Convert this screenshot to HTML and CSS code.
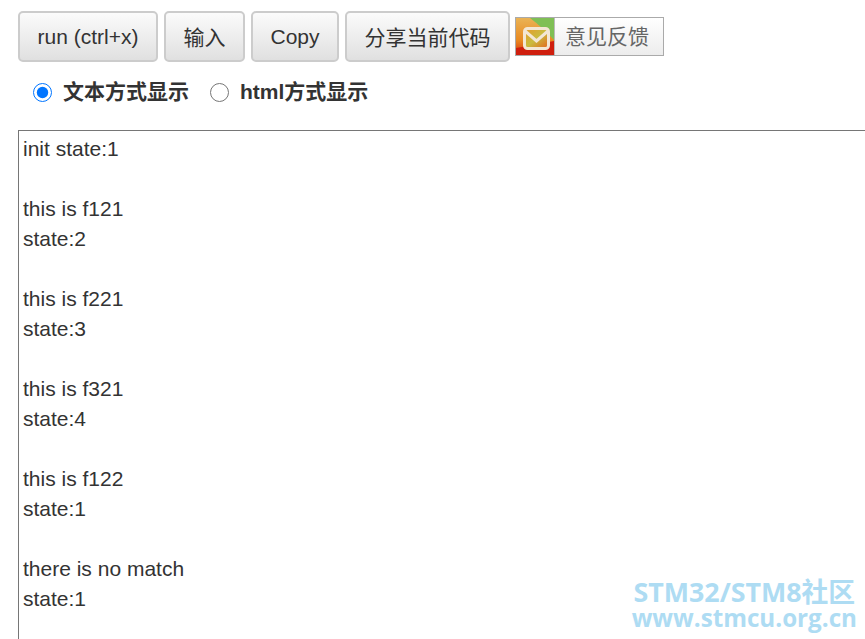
FILE: index.html
```html
<!DOCTYPE html>
<html lang="en">
<head>
    <meta charset="UTF-8">
    <meta name="viewport" content="width=device-width, initial-scale=1.0">
    <title>Run</title>
    <link rel="stylesheet" href="styles.css">
</head>
<body>
    <!-- Toolbar -->
    <div class="toolbar">
        <button class="tool-button btn-run">run (ctrl+x)</button>
        <button class="tool-button btn-input">输入</button>
        <button class="tool-button btn-copy">Copy</button>
        <button class="tool-button btn-share">分享当前代码</button>
        <a class="feedback" href="#">
            <span class="feedback-icon">
                <svg width="38" height="37" viewBox="0 0 38 37">
                    <defs>
                        <linearGradient id="mail-bg" x1="0" y1="0" x2="0" y2="1">
                            <stop offset="0" stop-color="#eab355"/>
                            <stop offset="0.6" stop-color="#e98a22"/>
                            <stop offset="1" stop-color="#d8330f"/>
                        </linearGradient>
                        <linearGradient id="mail-fill" x1="0" y1="0" x2="1" y2="1">
                            <stop offset="0" stop-color="#e8982a"/>
                            <stop offset="0.5" stop-color="#c9bb3e"/>
                            <stop offset="1" stop-color="#e5641c"/>
                        </linearGradient>
                    </defs>
                    <rect width="38" height="37" fill="url(#mail-bg)"/>
                    <path d="M14 0H38V22Q26 9 14 0Z" fill="#7fbf55"/>
                    <path d="M0 30Q18 27 38 23V37H0Z" fill="#cf1f0e"/>
                    <rect x="8.5" y="10.5" width="24" height="20" rx="3" fill="url(#mail-fill)" stroke="#f3e6d3" stroke-width="3"/>
                    <path d="M9 13L20.5 23L32 13" fill="none" stroke="#f3e6d3" stroke-width="3"/>
                </svg>
            </span>
            <span class="feedback-text">意见反馈</span>
        </a>
    </div>

    <!-- Output Mode -->
    <div class="mode-row">
        <label class="mode-option"><input type="radio" name="mode" checked>文本方式显示</label>
        <label class="mode-option"><input type="radio" name="mode">html方式显示</label>
    </div>

    <!-- Output Box -->
    <div class="output-box">
        <div>init state:1</div>
        <br>
        <div>this is f121</div>
        <div>state:2</div>
        <br>
        <div>this is f221</div>
        <div>state:3</div>
        <br>
        <div>this is f321</div>
        <div>state:4</div>
        <br>
        <div>this is f122</div>
        <div>state:1</div>
        <br>
        <div>there is no match</div>
        <div>state:1</div>
    </div>

    <!-- Watermark -->
    <div class="watermark">
        <div class="watermark-title">STM32/STM8社区</div>
        <div class="watermark-url">www.stmcu.org.cn</div>
    </div>
</body>
</html>
```

FILE: styles.css
```css
html, body {
    height: 100%;
}
body {
    margin: 0;
    padding: 11px 0 0 18px;
    box-sizing: border-box;
    background-color: white;
    color: #333;
    font-family: "Liberation Sans", "Noto Sans CJK SC", sans-serif;
    font-size: 21px;
    overflow: hidden;
    position: relative;
}
.toolbar {
    display: flex;
    align-items: flex-start;
    gap: 6px;
}
.tool-button {
    height: 51px;
    padding: 0;
    border: 2px solid #ccc;
    border-radius: 5px;
    background: linear-gradient(to bottom, #fbfbfb, #e0e0e0);
    color: #333;
    font-family: inherit;
    font-size: 21px;
    cursor: pointer;
}
.btn-run { width: 140px; }
.btn-input { width: 81px; padding-bottom: 2px; }
.btn-copy { width: 88px; }
.btn-share { width: 165px; padding-bottom: 2px; }
.feedback {
    display: flex;
    width: 149px;
    height: 39px;
    box-sizing: border-box;
    margin: 6px 0 0 -1px;
    border: 1px solid #aaa;
    text-decoration: none;
}
.feedback-icon {
    width: 38px;
    height: 37px;
    flex-shrink: 0;
}
.feedback-icon svg {
    display: block;
}
.feedback-text {
    flex: 1;
    border-left: 1px solid #bbb;
    background: linear-gradient(to bottom, #fff, #ececec);
    color: #666;
    font-size: 21px;
    line-height: 37px;
    text-indent: 10px;
}
.mode-row {
    display: flex;
    align-items: center;
    gap: 21px;
    height: 30px;
    margin: 13px 0 0 15px;
    font-weight: bold;
}
.mode-option {
    display: flex;
    align-items: center;
    gap: 11px;
}
.mode-option input {
    width: 19px;
    height: 19px;
    margin: 4px 0 0;
}
.output-box {
    width: 900px;
    height: 600px;
    margin-top: 25px;
    padding: 3px 4px;
    border: 1px solid #767676;
    line-height: 30px;
    box-sizing: border-box;
}
.watermark {
    position: absolute;
    right: 8px;
    bottom: 9px;
    color: #aedcf3;
    font-family: "Open Sans", "Noto Sans CJK SC", sans-serif;
    font-weight: bold;
    text-align: center;
    pointer-events: none;
}
.watermark-title {
    font-size: 26.8px;
    line-height: 28px;
}
.watermark-url {
    font-size: 24.2px;
    line-height: 24px;
}
```
